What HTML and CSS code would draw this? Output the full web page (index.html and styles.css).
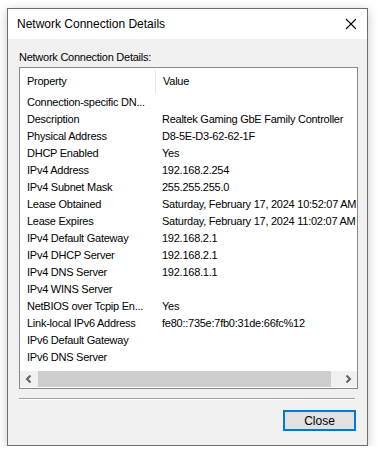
FILE: index.html
```html
<!DOCTYPE html>
<html lang="en">
<head>
    <meta charset="UTF-8">
    <title>Network Connection Details</title>
    <link rel="stylesheet" href="styles.css">
</head>
<body>
    <div class="window">
        <div class="titlebar">
            <span class="title">Network Connection Details</span>
            <span class="close-x">
                <svg width="12" height="12" viewBox="0 0 12 12"><path d="M1 1 L11 11 M11 1 L1 11" stroke="#000" stroke-width="1.1" fill="none"/></svg>
            </span>
        </div>
        <div class="content">
            <div class="label">Network Connection Details:</div>
            <div class="listbox">
                <div class="list-header">
                    <div class="col-prop">Property</div>
                    <div class="col-val">Value</div>
                </div>
                <div class="list-rows">
                    <div class="row"><div class="col-prop">Connection-specific DN...</div><div class="col-val"></div></div>
                    <div class="row"><div class="col-prop">Description</div><div class="col-val">Realtek Gaming GbE Family Controller</div></div>
                    <div class="row"><div class="col-prop">Physical Address</div><div class="col-val">D8-5E-D3-62-62-1F</div></div>
                    <div class="row"><div class="col-prop">DHCP Enabled</div><div class="col-val">Yes</div></div>
                    <div class="row"><div class="col-prop">IPv4 Address</div><div class="col-val">192.168.2.254</div></div>
                    <div class="row"><div class="col-prop">IPv4 Subnet Mask</div><div class="col-val">255.255.255.0</div></div>
                    <div class="row"><div class="col-prop">Lease Obtained</div><div class="col-val">Saturday, February 17, 2024 10:52:07 AM</div></div>
                    <div class="row"><div class="col-prop">Lease Expires</div><div class="col-val">Saturday, February 17, 2024 11:02:07 AM</div></div>
                    <div class="row"><div class="col-prop">IPv4 Default Gateway</div><div class="col-val">192.168.2.1</div></div>
                    <div class="row"><div class="col-prop">IPv4 DHCP Server</div><div class="col-val">192.168.2.1</div></div>
                    <div class="row"><div class="col-prop">IPv4 DNS Server</div><div class="col-val">192.168.1.1</div></div>
                    <div class="row"><div class="col-prop">IPv4 WINS Server</div><div class="col-val"></div></div>
                    <div class="row"><div class="col-prop">NetBIOS over Tcpip En...</div><div class="col-val">Yes</div></div>
                    <div class="row"><div class="col-prop">Link-local IPv6 Address</div><div class="col-val">fe80::735e:7fb0:31de:66fc%12</div></div>
                    <div class="row"><div class="col-prop">IPv6 Default Gateway</div><div class="col-val"></div></div>
                    <div class="row"><div class="col-prop">IPv6 DNS Server</div><div class="col-val"></div></div>
                </div>
                <div class="hscroll">
                    <div class="arrow">
                        <svg width="8" height="8" viewBox="0 0 8 8"><path d="M5.5 0.5 L2 4 L5.5 7.5" stroke="#606060" stroke-width="2" fill="none"/></svg>
                    </div>
                    <div class="track"><div class="thumb"></div></div>
                    <div class="arrow">
                        <svg width="8" height="8" viewBox="0 0 8 8"><path d="M2.5 0.5 L6 4 L2.5 7.5" stroke="#606060" stroke-width="2" fill="none"/></svg>
                    </div>
                </div>
            </div>
            <div class="separator"></div>
            <div class="buttons">
                <button class="btn-close">Close</button>
            </div>
        </div>
    </div>
</body>
</html>
```

FILE: styles.css
```css
body { margin: 0; background: #ffffff; font-family: "Liberation Sans", Arial, sans-serif; font-size: 11px; letter-spacing: -0.25px; color: #000; }
.window { margin: 8px 0 0 7px; width: 359px; height: 436px; border: 1px solid #6e6e6e; background: #f0f0f0; box-shadow: 0 2px 10px rgba(0,0,0,0.22); display: flex; flex-direction: column; }
.titlebar { height: 30px; background: #fff; display: flex; align-items: center; justify-content: space-between; padding: 0 10px 0 9px; }
.title { font-size: 12px; letter-spacing: 0; }
.close-x { width: 12px; height: 12px; display: flex; }
.content { padding: 10px 10px 0 11px; display: flex; flex-direction: column; }
.label { height: 16px; line-height: 16px; margin-bottom: 2px; }
.listbox { width: 337px; height: 320px; border: 1px solid #828790; background: #fff; display: flex; flex-direction: column; overflow: hidden; }
.list-header { display: flex; height: 26px; align-items: center; }
.list-header .col-prop { border-right: 1px solid #e5e5e5; height: 23px; line-height: 23px; }
.list-header .col-val { line-height: 23px; }
.list-rows { flex-grow: 1; }
.row { display: flex; height: 17px; line-height: 17px; }
.col-prop { width: 128px; padding-left: 7px; white-space: nowrap; overflow: hidden; flex-shrink: 0; }
.col-val { padding-left: 7px; white-space: nowrap; flex-shrink: 0; }
.hscroll { height: 16px; display: flex; background: #f0f0f0; margin-bottom: 1px; }
.arrow { width: 18px; display: flex; align-items: center; justify-content: center; flex-shrink: 0; }
.track { flex-grow: 1; display: flex; }
.thumb { width: 293px; background: #cdcdcd; }
.separator { margin-top: 9px; width: 336px; border-top: 1px solid #a0a0a0; border-bottom: 1px solid #fff; }
.buttons { display: flex; justify-content: flex-end; padding-top: 10px; padding-right: 1px; }
.btn-close { width: 73px; height: 21px; border: 2px solid #0078d7; background: #e1e1e1; font-family: inherit; font-size: 12px; letter-spacing: 0; color: #000; padding: 0; }
```
